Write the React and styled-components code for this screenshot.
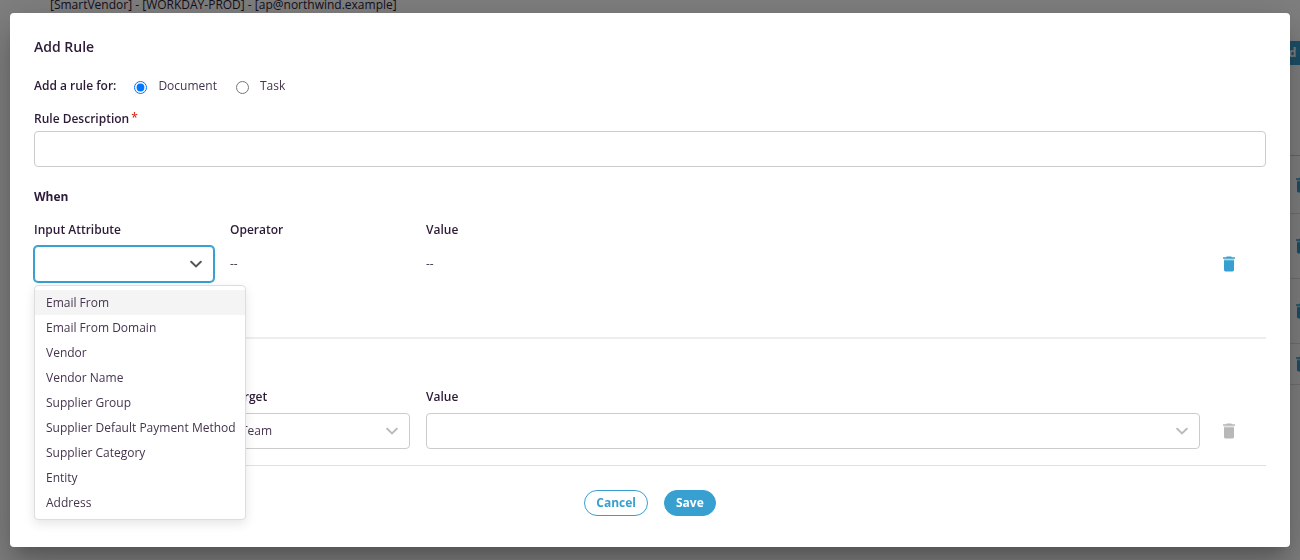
import React, { useState } from "react";
import styled, { createGlobalStyle } from "styled-components";

// Color palette
const BLUE = "#37a0d0";
const INK = "#2d1b38";
const TEXT = "#45344f";
const BORDER = "#cccccc";
const LINE = "#e0e0e0";
const WHITE = "#fff";

const GlobalStyle = createGlobalStyle`
  * {
    box-sizing: border-box;
  }

  body {
    margin: 0;
    background: ${WHITE};
    color: ${TEXT};
    font-family: "Open Sans", "Noto Sans", sans-serif;
    font-size: 12px;
    line-height: 16px;
    overflow: hidden;
  }

  button,
  input,
  select {
    font: inherit;
    color: inherit;
  }
`;

const Page = styled.main`
  height: 100vh;
  overflow: hidden;
`;

const PageTitle = styled.p`
  margin: -3px 0 28px;
  padding: 0 50px;
  color: ${INK};
`;

const PageActions = styled.div`
  display: flex;
  justify-content: flex-end;
  margin: 0 -42px 90px 0;
`;

const PageButton = styled.button`
  height: 24px;
  padding: 0 16px;
  border: none;
  border-radius: 2px;
  background: ${BLUE};
  color: ${WHITE};
  font-weight: 700;
`;

const RuleList = styled.ul`
  margin: 0 -8px 0 50px;
  padding: 0;
  list-style: none;
  border-top: 1px solid ${BORDER};
`;

const RuleItem = styled.li`
  display: flex;
  align-items: center;
  justify-content: flex-end;
  height: ${(props) => props.$height}px;
  border-bottom: 1px solid ${LINE};
`;

const Overlay = styled.div`
  position: fixed;
  inset: 0;
  background: rgba(0, 0, 0, 0.5);
  padding: 13px 10px;
`;

const Dialog = styled.form`
  padding: 24px 24px 31px;
  background: ${WHITE};
  border-radius: 4px;
  box-shadow:
    0 11px 15px -7px rgba(0, 0, 0, 0.2),
    0 24px 38px 3px rgba(0, 0, 0, 0.14),
    0 9px 46px 8px rgba(0, 0, 0, 0.12);
`;

const Title = styled.h2`
  margin: 0 0 21px;
  color: ${INK};
  font-size: 14px;
  line-height: 20px;
  font-weight: 600;
`;

const RadioGroup = styled.fieldset`
  display: flex;
  align-items: center;
  margin: 0 0 17px;
  padding: 0;
  border: none;
`;

const Legend = styled.span`
  margin-right: 18px;
  color: ${INK};
  font-weight: 600;
`;

const RadioLabel = styled.label`
  display: flex;
  align-items: center;
  gap: 11px;
  margin-right: 19px;
`;

const Radio = styled.input`
  width: 13px;
  height: 13px;
  margin: 2px 0 0;
`;

const Label = styled.label`
  display: block;
  color: ${INK};
  font-weight: 600;
`;

const Required = styled.span`
  margin-left: -1px;
  color: #d93025;
  line-height: 1;
  vertical-align: 1px;
`;

const TextInput = styled.input`
  display: block;
  width: 100%;
  height: 36px;
  margin: 4px 0 22px;
  padding: 0 12px;
  border: 1px solid ${BORDER};
  border-radius: 4px;
  outline: none;
`;

const SectionTitle = styled.h3`
  margin: 0 0 17px;
  color: ${INK};
  font-size: 12px;
  line-height: 16px;
  font-weight: 700;
`;

const Row = styled.div`
  display: grid;
  grid-template-columns: 180px 180px 1fr 50px;
  column-gap: 16px;
  row-gap: 8px;
  align-items: center;
`;

const Section = styled.section`
  padding-bottom: 55px;
  margin-bottom: 50px;
  border-bottom: 2px solid #ededed;
`;

const ActionSection = styled.section`
  padding-bottom: 16px;
  margin-bottom: 24px;
  border-bottom: 1px solid ${LINE};
`;

const SelectBox = styled.div`
  position: relative;
  color: ${(props) => (props.$active ? "#555" : "#bbb")};

  > svg {
    position: absolute;
    top: 12px;
    right: 12px;
    pointer-events: none;
  }
`;

const Select = styled.select`
  display: block;
  width: 100%;
  height: 36px;
  padding: 0 32px 0 10px;
  appearance: none;
  background: ${WHITE};
  border: 1px solid ${(props) => (props.$active ? BLUE : BORDER)};
  border-radius: 4px;
  box-shadow: ${(props) => (props.$active ? `0 0 0 1px ${BLUE}` : "none")};
  color: ${TEXT};
  outline: none;
`;

const Menu = styled.ul`
  position: absolute;
  top: 100%;
  left: 0;
  z-index: 2;
  margin: 3px 0 0;
  padding: 4px 0;
  background: ${WHITE};
  border: 1px solid #ddd;
  border-radius: 4px;
  box-shadow: 0 4px 11px rgba(0, 0, 0, 0.1);
  list-style: none;
  color: ${TEXT};
`;

const MenuItem = styled.li`
  padding: 0 9px 0 11px;
  line-height: 25px;
  white-space: nowrap;
  cursor: pointer;
  background: ${(props) => (props.$focused ? "#f4f4f4" : "transparent")};
`;

const IconButton = styled.button`
  display: flex;
  justify-self: start;
  padding: 0 7px;
  border: none;
  background: none;
  color: ${(props) => (props.disabled ? "#b8b8b8" : BLUE)};
`;

const RuleDelete = styled(IconButton)`
  padding: 0;
`;

const Footer = styled.footer`
  display: flex;
  justify-content: center;
  gap: 16px;
`;

const PillButton = styled.button`
  height: 26px;
  padding: 0 11px;
  border: 1px solid ${BLUE};
  border-radius: 13px;
  background: ${(props) => (props.$primary ? BLUE : WHITE)};
  color: ${(props) => (props.$primary ? WHITE : BLUE)};
  font-weight: 700;
`;

const attributes = [
  "Email From",
  "Email From Domain",
  "Vendor",
  "Vendor Name",
  "Supplier Group",
  "Supplier Default Payment Method",
  "Supplier Category",
  "Entity",
  "Address",
];

const rules = [58, 65, 65, 41];

const Chevron = () => (
  <svg width="12" height="12" viewBox="0 0 12 12" fill="none" aria-hidden="true">
    <path
      d="M1.2 3.8 6 8.4l4.8-4.6"
      stroke="currentColor"
      strokeWidth="2"
      strokeLinecap="round"
    />
  </svg>
);

const Trash = () => (
  <svg width="12" height="16" viewBox="0 0 12 16" fill="currentColor" aria-hidden="true">
    <path d="M3.8.5h4.4l.8.8h3v1.5H0V1.3h3z" />
    <path d="M1 2.8h10v1.6H1z" opacity="0.4" />
    <path d="M1 4.300h10V14a1.400 1.400 0 0 1-1.400 1.400H2.400A1.400 1.400 0 0 1 1 14z" />
  </svg>
);

export default function App() {
  const [open, setOpen] = useState(true);
  const [focused, setFocused] = useState(0);
  const [attribute, setAttribute] = useState("");

  const toggleMenu = (e) => {
    e.preventDefault();
    setOpen((v) => !v);
  };

  const pick = (name) => {
    setAttribute(name);
    setOpen(false);
  };

  return (
    <>
      <GlobalStyle />
      <Page>
        <PageTitle>
          [SmartVendor] - [WORKDAY-PROD] - [ap@northwind.example]
        </PageTitle>
        <PageActions>
          <PageButton type="button">Add Rule</PageButton>
        </PageActions>
        <RuleList>
          {rules.map((height, i) => (
            <RuleItem key={i} $height={height}>
              <RuleDelete type="button" aria-label="Delete rule">
                <Trash />
              </RuleDelete>
            </RuleItem>
          ))}
        </RuleList>
      </Page>

      <Overlay>
        <Dialog
          role="dialog"
          aria-labelledby="dialog-title"
          onSubmit={(e) => e.preventDefault()}
        >
          <Title id="dialog-title">Add Rule</Title>

          <RadioGroup aria-labelledby="rule-for">
            <Legend id="rule-for">Add a rule for:</Legend>
            <RadioLabel>
              <Radio type="radio" name="ruleFor" defaultChecked />
              Document
            </RadioLabel>
            <RadioLabel>
              <Radio type="radio" name="ruleFor" />
              Task
            </RadioLabel>
          </RadioGroup>

          <Label htmlFor="description">
            Rule Description <Required>*</Required>
          </Label>
          <TextInput id="description" type="text" />

          <Section>
            <SectionTitle>When</SectionTitle>
            <Row>
              <Label htmlFor="attribute">Input Attribute</Label>
              <Label as="span">Operator</Label>
              <Label as="span">Value</Label>
              <span />
              <SelectBox $active>
                <Select
                  id="attribute"
                  $active
                  value={attribute}
                  onMouseDown={toggleMenu}
                  onChange={(e) => setAttribute(e.target.value)}
                >
                  <option value="" />
                  {attributes.map((name) => (
                    <option key={name}>{name}</option>
                  ))}
                </Select>
                <Chevron />
                {open && (
                  <Menu role="listbox" aria-label="Input Attribute">
                    {attributes.map((name, i) => (
                      <MenuItem
                        key={name}
                        role="option"
                        aria-selected={name === attribute}
                        $focused={i === focused}
                        onMouseEnter={() => setFocused(i)}
                        onClick={() => pick(name)}
                      >
                        {name}
                      </MenuItem>
                    ))}
                  </Menu>
                )}
              </SelectBox>
              <span>--</span>
              <span>--</span>
              <IconButton type="button" aria-label="Delete condition">
                <Trash />
              </IconButton>
            </Row>
          </Section>

          <ActionSection>
            <Row>
              <span />
              <Label htmlFor="target">Target</Label>
              <Label htmlFor="value">Value</Label>
              <span />
              <SelectBox>
                <Select aria-label="Action">
                  <option value="" />
                </Select>
                <Chevron />
              </SelectBox>
              <SelectBox>
                <Select id="target">
                  <option>Team</option>
                </Select>
                <Chevron />
              </SelectBox>
              <SelectBox>
                <Select id="value">
                  <option value="" />
                </Select>
                <Chevron />
              </SelectBox>
              <IconButton type="button" aria-label="Delete action" disabled>
                <Trash />
              </IconButton>
            </Row>
          </ActionSection>

          <Footer>
            <PillButton type="button">Cancel</PillButton>
            <PillButton type="submit" $primary>
              Save
            </PillButton>
          </Footer>
        </Dialog>
      </Overlay>
    </>
  );
}
